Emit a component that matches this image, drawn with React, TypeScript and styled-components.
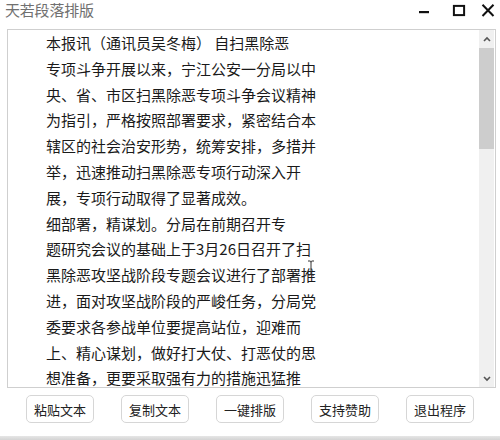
import React from 'react'
import styled, { createGlobalStyle } from 'styled-components'

const GlobalStyle = createGlobalStyle`
  html, body {
    margin: 0;
    padding: 0;
    background: #ffffff;
  }
  body {
    font-family: "Noto Sans CJK SC", "Noto Sans", sans-serif;
  }
`

const Window = styled.div`
  position: relative;
  display: flex;
  flex-direction: column;
  width: 500px;
  height: 440px;
  background: #ffffff;
  overflow: hidden;
`

const TitleBar = styled.div`
  display: flex;
  align-items: flex-start;
  justify-content: space-between;
  height: 29px;
  padding-left: 5px;
  box-sizing: border-box;
`

const Title = styled.div`
  font-size: 15px;
  line-height: 20px;
  color: #707070;
  letter-spacing: -0.2px;
`

const Controls = styled.div`
  display: flex;
  align-items: flex-start;
  padding-top: 4px;
`

const ControlButton = styled.div<{ width: number }>`
  display: flex;
  justify-content: center;
  width: ${p => p.width}px;
  height: 14px;
`

const EditorWrap = styled.div`
  padding-left: 7px;
  padding-right: 4px;
`

const Editor = styled.div`
  display: flex;
  height: 359px;
  border: 1px solid #cfcfcf;
  background: #ffffff;
  box-sizing: border-box;
`

const TextPane = styled.div`
  position: relative;
  flex: 1;
  overflow: hidden;
  padding: 0 0 0 38px;
  font-size: 15px;
  line-height: 25.8px;
  color: #1a1a1a;
`

const Line = styled.div`
  white-space: pre;
  height: 25.8px;
`

const Scrollbar = styled.div`
  display: flex;
  flex-direction: column;
  width: 15px;
  margin-right: 1px;
  background: #f0f0f0;
`

const ArrowCell = styled.div`
  display: flex;
  align-items: center;
  justify-content: center;
  height: 17px;
`

const Thumb = styled.div`
  height: 101px;
  margin-top: 1px;
  background: #cdcdcd;
`

const Track = styled.div`
  flex: 1;
`

const ButtonRow = styled.div`
  display: flex;
  gap: 27px;
  padding: 7px 0 0 26px;
  flex: 1;
`

const Button = styled.button`
  width: 68px;
  height: 28px;
  padding: 0;
  border: 1px solid #d6d6d6;
  border-radius: 5px;
  background: #ffffff;
  font-family: "Noto Sans CJK SC", "Noto Sans", sans-serif;
  font-size: 13px;
  color: #222222;
`

const BottomEdge = styled.div`
  height: 4px;
  background: linear-gradient(#e6e6e6, #d4d4d4);
`

const Cursor = styled.svg`
  position: absolute;
  left: 299px;
  top: 230px;
`

const lines = [
  '本报讯（通讯员吴冬梅） 自扫黑除恶',
  '专项斗争开展以来，宁江公安一分局以中',
  '央、省、市区扫黑除恶专项斗争会议精神',
  '为指引，严格按照部署要求，紧密结合本',
  '辖区的社会治安形势，统筹安排，多措并',
  '举，迅速推动扫黑除恶专项行动深入开',
  '展，专项行动取得了显著成效。',
  '细部署，精谋划。分局在前期召开专',
  '题研究会议的基础上于3月26日召开了扫',
  '黑除恶攻坚战阶段专题会议进行了部署推',
  '进，面对攻坚战阶段的严峻任务，分局党',
  '委要求各参战单位要提高站位，迎难而',
  '上、精心谋划，做好打大仗、打恶仗的思',
  '想准备，更要采取强有力的措施迅猛推',
]

const buttons = ['粘贴文本', '复制文本', '一键排版', '支持赞助', '退出程序']

export default function App() {
  return (
    <>
      <GlobalStyle />
      <Window>
        <TitleBar>
          <Title>天若段落排版</Title>
          <Controls>
            <ControlButton width={36}>
              <svg width="12" height="14" viewBox="0 0 12 14">
                <rect x="1" y="7" width="10" height="2.2" fill="#111" />
              </svg>
            </ControlButton>
            <ControlButton width={34}>
              <svg width="14" height="14" viewBox="0 0 14 14">
                <rect x="1.9" y="1.9" width="10.2" height="9.2" fill="none" stroke="#111" strokeWidth="2" />
              </svg>
            </ControlButton>
            <ControlButton width={24}>
              <svg width="14" height="14" viewBox="0 0 14 14">
                <path d="M1.5 0.8 L12.5 12 M12.5 0.8 L1.5 12" stroke="#111" strokeWidth="2" />
              </svg>
            </ControlButton>
          </Controls>
        </TitleBar>
        <EditorWrap>
          <Editor>
            <TextPane>
              {lines.map((l, i) => (
                <Line key={i}>{l}</Line>
              ))}
              <Cursor width="8" height="16" viewBox="0 0 8 16">
                <path d="M1 1 H3 Q4 1 4 2.5 V13.5 Q4 15 3 15 H1 M7 1 H5 Q4 1 4 2.5 M4 13.5 Q4 15 5 15 H7" fill="none" stroke="#333" strokeWidth="1" />
              </Cursor>
            </TextPane>
            <Scrollbar>
              <ArrowCell>
                <svg width="8" height="6" viewBox="0 0 8 6">
                  <path d="M1 5 L4 2 L7 5" fill="none" stroke="#555" strokeWidth="1.6" />
                </svg>
              </ArrowCell>
              <Thumb />
              <Track />
              <ArrowCell>
                <svg width="8" height="6" viewBox="0 0 8 6">
                  <path d="M1 1 L4 4 L7 1" fill="none" stroke="#555" strokeWidth="1.6" />
                </svg>
              </ArrowCell>
            </Scrollbar>
          </Editor>
        </EditorWrap>
        <ButtonRow>
          {buttons.map(b => (
            <Button key={b}>{b}</Button>
          ))}
        </ButtonRow>
        <BottomEdge />
      </Window>
    </>
  )
}
